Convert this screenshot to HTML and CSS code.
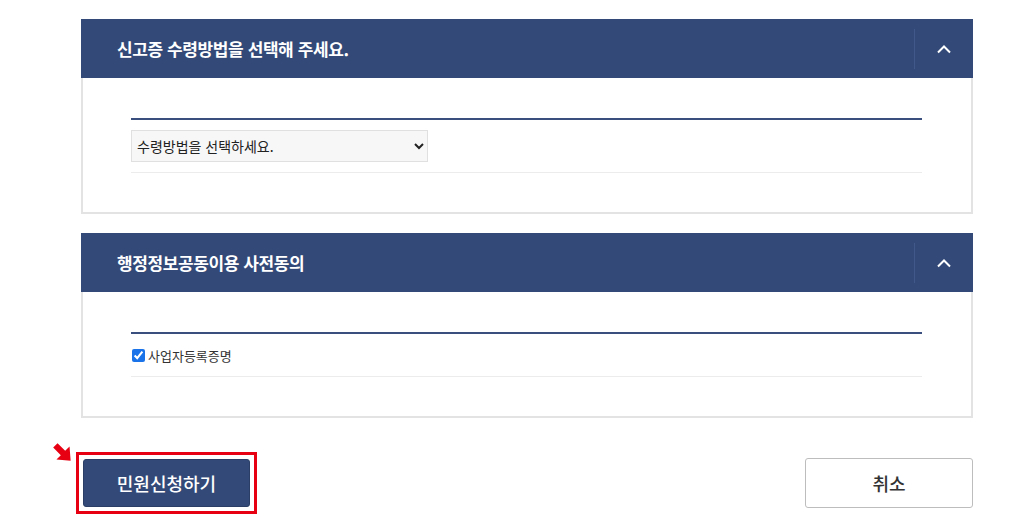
FILE: index.html
```html
<!DOCTYPE html>
<html lang="ko">
<head>
    <meta charset="UTF-8">
    <meta name="viewport" content="width=device-width, initial-scale=1.0">
    <title>민원신청</title>
    <link rel="stylesheet" href="styles.css">
</head>
<body>

    <div class="wrap">
        <!-- 신고증 수령방법 -->
        <section class="panel">
            <div class="panel-head">
                <h2>신고증 수령방법을 선택해 주세요.</h2>
                <button class="toggle" type="button" aria-label="접기">
                    <svg width="16" height="10" viewBox="0 0 16 10"><polyline points="2,8.5 8,2.5 14,8.5" fill="none" stroke="#fff" stroke-width="2"/></svg>
                </button>
            </div>
            <div class="panel-body">
                <div class="field-row">
                    <select class="method">
                        <option>수령방법을 선택하세요.</option>
                    </select>
                </div>
            </div>
        </section>

        <!-- 행정정보공동이용 사전동의 -->
        <section class="panel panel-agree">
            <div class="panel-head">
                <h2>행정정보공동이용 사전동의</h2>
                <button class="toggle" type="button" aria-label="접기">
                    <svg width="16" height="10" viewBox="0 0 16 10"><polyline points="2,8.5 8,2.5 14,8.5" fill="none" stroke="#fff" stroke-width="2"/></svg>
                </button>
            </div>
            <div class="panel-body">
                <div class="field-row check-row">
                    <label><input type="checkbox" checked> 사업자등록증명</label>
                </div>
            </div>
        </section>

        <div class="actions">
            <div class="highlight">
                <span class="pointer">
                    <svg width="24" height="24" viewBox="0 0 22 22"><polygon points="2,6 6,2 13,9 17,5 18,18 5,17 9,13" fill="#e60012"/></svg>
                </span>
                <button class="btn-primary" type="button">민원신청하기</button>
            </div>
            <button class="btn-cancel" type="button">취소</button>
        </div>
    </div>

</body>
</html>
```

FILE: styles.css
```css
* {
    margin: 0;
    padding: 0;
    box-sizing: border-box;
}

body {
    font-family: "Noto Sans CJK KR", "Noto Sans", sans-serif;
    background: #fff;
    color: #333;
}

.wrap {
    width: 892px;
    margin-left: 81px;
    padding-top: 19px;
}

/* panel */
.panel {
    border: 2px solid #e3e3e3;
    border-top: none;
    margin-bottom: 19px;
}

.panel-head {
    display: flex;
    align-items: center;
    height: 59px;
    background: #334a78;
    margin: 0 -2px;
}

.panel-head h2 {
    flex: 1;
    padding-left: 36px;
    font-size: 17px;
    font-weight: 700;
    letter-spacing: -0.4px;
    color: #fff;
}

.toggle {
    width: 59px;
    height: 40px;
    border: none;
    border-left: 1px solid #41588a;
    background: transparent;
    display: flex;
    align-items: center;
    justify-content: center;
    cursor: pointer;
}

.panel-body {
    padding: 40px 49px 39px 48px;
}

.field-row {
    border-top: 2px solid #3a4f7e;
    border-bottom: 1px solid #ececec;
    padding: 10px 0;
}

.method {
    width: 297px;
    height: 32px;
    padding: 0 1px;
    font-family: inherit;
    font-size: 14px;
    color: #222;
    background: #f7f7f7;
    border: 1px solid #e0e0e0;
}

.check-row {
    padding: 12px 0;
}

.check-row label {
    display: flex;
    align-items: center;
    gap: 3px;
    font-size: 13px;
    color: #333;
    height: 18px;
}

.check-row input {
    width: 13px;
    height: 13px;
    margin: 0 0 0 1px;
    accent-color: #1a73e8;
}

/* buttons */
.actions {
    display: flex;
    justify-content: space-between;
    align-items: flex-start;
    margin-top: 34px;
}

.highlight {
    position: relative;
    margin-left: -5px;
    padding: 4px;
    border: 3px solid #e60012;
}

.pointer {
    position: absolute;
    left: -28px;
    top: -14px;
}

.btn-primary {
    display: block;
    width: 167px;
    height: 48px;
    border: 1px solid #2a3e66;
    border-radius: 3px;
    background: #334a78;
    color: #fff;
    font-family: inherit;
    font-size: 18px;
    font-weight: 500;
    cursor: pointer;
}

.btn-cancel {
    width: 168px;
    height: 50px;
    margin-top: 6px;
    border: 1px solid #bdbdbd;
    border-radius: 3px;
    background: #fff;
    color: #333;
    font-family: inherit;
    font-size: 18px;
    font-weight: 500;
    cursor: pointer;
}
```
